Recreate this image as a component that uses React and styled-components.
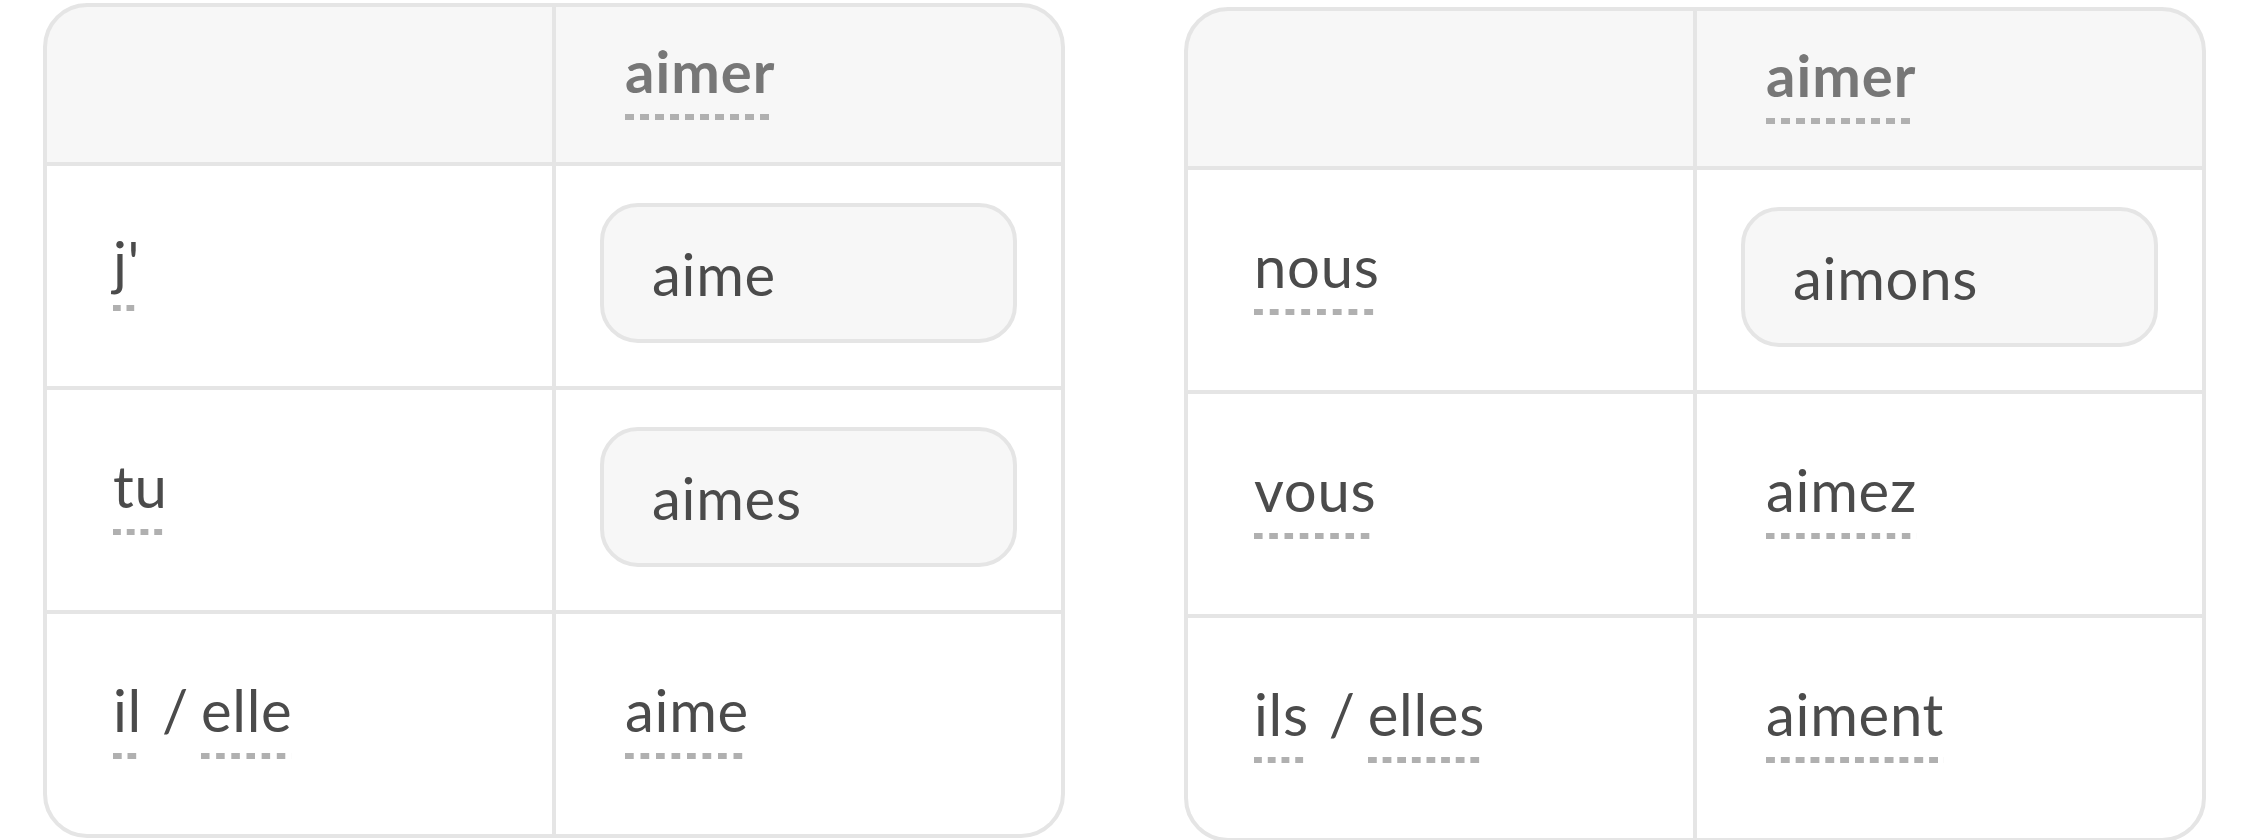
import React from 'react';
import styled, { createGlobalStyle } from 'styled-components';

const GlobalStyle = createGlobalStyle`
  html, body {
    margin: 0;
    padding: 0;
    background: #ffffff;
  }
  body {
    font-family: Lato, "Noto Sans", sans-serif;
    color: #4b4b4b;
  }
`;

const Page = styled.div`
  display: flex;
  align-items: flex-start;
  gap: 119px;
  padding: 0 43px;
  width: 2250px;
  height: 840px;
  box-sizing: border-box;
  overflow: hidden;
`;

const Table = styled.div`
  flex: none;
  width: 1022px;
  margin-top: ${props => props.$top}px;
  box-sizing: border-box;
  display: grid;
  grid-template-columns: 1fr 1fr;
  grid-template-rows: 155px repeat(3, 220px);
  gap: 4px;
  background: #e5e5e5;
  border: 4px solid #e5e5e5;
  border-radius: 44px;
  overflow: hidden;
`;

const Cell = styled.div`
  display: flex;
  align-items: center;
  min-width: 0;
  background: ${props => (props.$head ? '#f7f7f7' : '#ffffff')};
  padding: 0 ${props => (props.$pill ? 44 : props.$verb ? 69 : 66)}px;
`;

const Words = styled.div`
  display: flex;
  align-items: flex-start;
  margin-bottom: 8px;
  font-size: 58px;
  letter-spacing: ${props => (props.$bold ? 1 : 0.7)}px;
  font-weight: ${props => (props.$bold ? 700 : 400)};
  color: ${props => (props.$bold ? '#777777' : '#4b4b4b')};
`;

// dotted hint line under each word
const Hint = styled.span`
  display: inline-block;
  line-height: 1;
  padding-bottom: 20px;
  background-image: linear-gradient(to right, #b0b0b0 0 57%, transparent 57% 100%);
  background-size: 15px 6px;
  background-position: left bottom;
  background-repeat: round no-repeat;
  background-origin: border-box;
`;

const Slash = styled.span`
  display: inline-block;
  line-height: 1;
  margin: 0 12px 0 20px;
`;

const Pill = styled.div`
  flex: 1;
  height: 140px;
  margin-bottom: 6px;
  box-sizing: border-box;
  display: flex;
  align-items: center;
  padding: 0 48px;
  background: #f7f7f7;
  border: 4px solid #e5e5e5;
  border-radius: 38px;
  font-size: 58px;
  letter-spacing: 0.7px;
  color: #4b4b4b;
`;

const tables = [
  {
    top: 3,
    verb: 'aimer',
    rows: [
      { who: ["j'"], form: 'aime', pill: true },
      { who: ['tu'], form: 'aimes', pill: true },
      { who: ['il', 'elle'], form: 'aime', pill: false },
    ],
  },
  {
    top: 7,
    verb: 'aimer',
    rows: [
      { who: ['nous'], form: 'aimons', pill: true },
      { who: ['vous'], form: 'aimez', pill: false },
      { who: ['ils', 'elles'], form: 'aiment', pill: false },
    ],
  },
];

function Pronoun({ who }) {
  return (
    <Words>
      {who.map((w, i) => (
        <React.Fragment key={w}>
          {i > 0 && <Slash>/</Slash>}
          <Hint>{w}</Hint>
        </React.Fragment>
      ))}
    </Words>
  );
}

function Conjugation({ data }) {
  return (
    <Table $top={data.top}>
      <Cell $head />
      <Cell $head $verb>
        <Words $bold>
          <Hint>{data.verb}</Hint>
        </Words>
      </Cell>
      {data.rows.map(row => (
        <React.Fragment key={row.form + row.who[0]}>
          <Cell>
            <Pronoun who={row.who} />
          </Cell>
          {row.pill ? (
            <Cell $pill>
              <Pill>{row.form}</Pill>
            </Cell>
          ) : (
            <Cell $verb>
              <Words>
                <Hint>{row.form}</Hint>
              </Words>
            </Cell>
          )}
        </React.Fragment>
      ))}
    </Table>
  );
}

export default function App() {
  return (
    <>
      <GlobalStyle />
      <Page>
        {tables.map((t, i) => (
          <Conjugation key={i} data={t} />
        ))}
      </Page>
    </>
  );
}
